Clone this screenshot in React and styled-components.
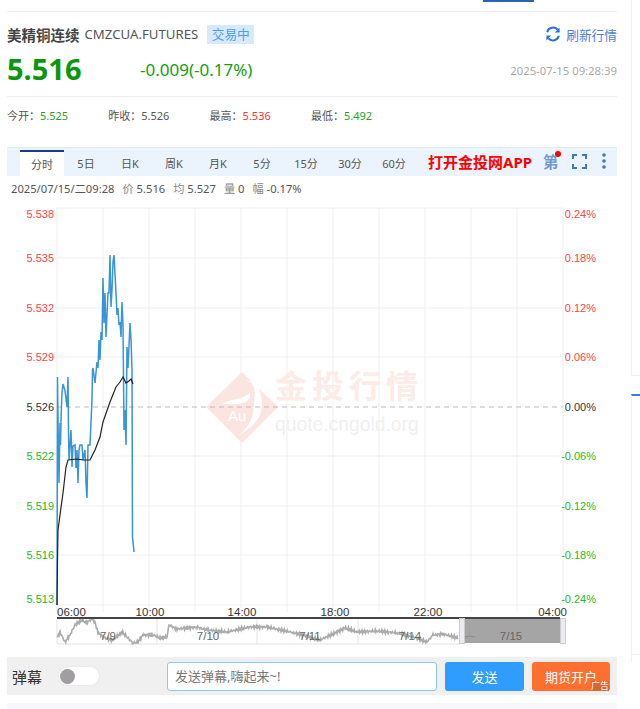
import React from "react"
import styled, { createGlobalStyle } from "styled-components"

const GlobalStyle = createGlobalStyle`
    html, body {
        margin: 0;
        padding: 0;
        background: #fff;
        overflow: hidden;
    }
    body {
        font-family: "Noto Sans", "Noto Sans CJK SC", sans-serif;
        color: #555;
    }
`

const Page = styled.div`
    display: flex;
    width: 640px;
    height: 709px;
    padding-left: 7px;
    box-sizing: border-box;
    overflow: hidden;
`

const Main = styled.main`
    width: 610px;
    flex: none;
    display: flex;
    flex-direction: column;
`

const Side = styled.aside`
    margin-left: 14px;
    flex: 1;
    display: flex;
    flex-direction: column;
`

const SidePanel = styled.div`
    height: ${props => props.$height}px;
    margin-bottom: ${props => props.$gap || 0}px;
    border-left: 1px solid #f0f0f0;
    border-bottom: ${props => props.$closed ? '1px solid #f0f0f0' : 'none'};
    border-top: ${props => props.$accent ? '2px solid #3b78e0' : 'none'};
    box-sizing: border-box;
`

const TopStrip = styled.div`
    height: 12px;
    box-sizing: border-box;
    border-bottom: 1px solid #f0f0f0;
    display: flex;
`

const TopMarker = styled.span`
    width: 51px;
    height: 2px;
    margin-left: 476px;
    background: #2a62b8;
`

const TitleRow = styled.header`
    margin-top: 11px;
    height: 22px;
    display: flex;
    align-items: center;
`

const Name = styled.h1`
    margin: 0;
    font-size: 14.5px;
    font-weight: bold;
    color: #444;
`

const Code = styled.span`
    margin-left: 5px;
    font-size: 13.2px;
    color: #555;
`

const Badge = styled.span`
    margin-left: 9px;
    width: 47px;
    height: 19px;
    line-height: 19px;
    text-align: center;
    font-size: 12.7px;
    color: #4b9df0;
    background: #d6eafc;
`

const Refresh = styled.a`
    margin-left: auto;
    display: flex;
    align-items: center;
    gap: 5px;
    font-size: 12.7px;
    color: #4c80d8;
`

const PriceRow = styled.section`
    height: 52px;
    box-sizing: border-box;
    border-bottom: 1px solid #f0f0f0;
    display: flex;
    align-items: center;
`

const Price = styled.strong`
    width: 133px;
    margin-bottom: 5px;
    font-size: 29px;
    font-weight: bold;
    color: #0a980a;
`

const Change = styled.span`
    margin-bottom: 2px;
    font-size: 17px;
    color: #12a012;
`

const Stamp = styled.time`
    margin-left: auto;
    font-size: 11.3px;
    color: #aaa;
`

const StatsRow = styled.section`
    height: 50px;
    padding-top: 9px;
    box-sizing: border-box;
    display: flex;
    line-height: 20px;
    font-size: 11px;
`

const Stat = styled.span`
    width: 101.3px;
    color: #555;
`

const StatValue = styled.span`
    color: ${props => props.$color || '#555'};
`

const TabBar = styled.nav`
    height: 29px;
    padding-left: 13px;
    box-sizing: border-box;
    background: #ebf3fd;
    border-top: 1px solid #e3ebf5;
    display: flex;
    align-items: flex-end;
`

const Tab = styled.span`
    width: 44px;
    height: 26px;
    box-sizing: border-box;
    text-align: center;
    font-size: 11px;
    line-height: ${props => props.$active ? '26px' : '24px'};
    color: #555;
    background: ${props => props.$active ? '#fff' : 'transparent'};
    border-top: 2px solid ${props => props.$active ? '#1c3a94' : 'transparent'};
`

const AppLink = styled.a`
    margin-left: 12px;
    height: 28px;
    line-height: 28px;
    font-size: 15px;
    font-weight: bold;
    color: #f00;
    white-space: nowrap;
`

const ToolGroup = styled.div`
    margin-left: 11px;
    height: 28px;
    display: flex;
    align-items: center;
`

const Dan = styled.span`
    position: relative;
    width: 16px;
    font-size: 15.5px;
    font-weight: bold;
    line-height: 28px;
    color: #6f9bd0;
    &::after {
        content: "";
        position: absolute;
        top: 3px;
        right: -2px;
        width: 6px;
        height: 6px;
        border-radius: 50%;
        background: #f00;
    }
`

const ToolIcon = styled.svg`
    margin-left: ${props => props.$gap}px;
    margin-bottom: 2px;
    display: block;
`

const InfoLine = styled.div`
    height: 24px;
    padding-left: 4px;
    display: flex;
    align-items: center;
    gap: 8px;
    font-size: 11.2px;
    color: #555;
`

const InfoLabel = styled.span`
    color: #888;
`

const Chart = styled.svg`
    display: block;
    width: 610px;
    height: 450px;
    flex: none;
`

const AxisLabel = styled.text`
    font-family: "Liberation Sans", sans-serif;
    font-size: 11px;
    fill: ${props => props.$color};
`

const TimeLabel = styled.text`
    font-family: "Liberation Sans", sans-serif;
    font-size: 11.5px;
    fill: #333;
`

const DayLabel = styled.text`
    font-family: "Liberation Sans", sans-serif;
    font-size: 11.5px;
    fill: #666;
`

const MarkTitle = styled.text`
    font-family: "Noto Sans CJK SC", sans-serif;
    font-size: 32px;
    font-weight: bold;
    letter-spacing: 5px;
    fill: #fcebe7;
`

const MarkSite = styled.text`
    font-family: "Liberation Sans", sans-serif;
    font-size: 19.3px;
    fill: #f0f0f0;
`

const MarkAu = styled.text`
    font-family: "Liberation Sans", sans-serif;
    font-size: 15px;
    fill: #fff;
`

const Footer = styled.footer`
    margin-top: 7px;
    height: 38px;
    background: #f0f0f0;
    display: flex;
    align-items: center;
    padding-left: 5px;
    box-sizing: border-box;
`

const FooterLabel = styled.span`
    width: 47px;
    font-size: 15px;
    color: #333;
`

const Toggle = styled.span`
    width: 40px;
    height: 18px;
    padding: 1px;
    box-sizing: border-box;
    border-radius: 9px;
    background: #fff;
    box-shadow: 0 0 2px #ddd;
    display: flex;
    align-items: center;
`

const Knob = styled.span`
    width: 15px;
    height: 15px;
    border-radius: 50%;
    background: #a09ea0;
`

const MessageInput = styled.input`
    margin-left: 68px;
    width: 270px;
    height: 29px;
    padding: 0 7px;
    box-sizing: border-box;
    border: 1px solid #8cc6f5;
    border-radius: 3px;
    outline: none;
    background: #fff;
    font-family: inherit;
    font-size: 13px;
    &::placeholder {
        color: #777;
        opacity: 1;
    }
`

const ActionButton = styled.button`
    position: relative;
    margin-left: 8px;
    width: ${props => props.$width}px;
    height: 29px;
    padding: 0;
    border: none;
    border-radius: 3px;
    background: ${props => props.$color};
    color: #fff;
    font-family: inherit;
    font-size: 13px;
`

const AdTag = styled.span`
    position: absolute;
    right: 1px;
    bottom: 0;
    width: 18px;
    height: 10px;
    line-height: 10px;
    font-size: 9px;
    text-align: center;
    background: #d9662e;
    color: #fff;
`

const BottomEdge = styled.div`
    margin-top: 8px;
    height: 6px;
    background: #f6f6fb;
`

const tabs = ['分时', '5日', '日K', '周K', '月K', '5分', '15分', '30分', '60分']

const stats = [
    { label: '今开', value: '5.525', color: '#1fa51f' },
    { label: '昨收', value: '5.526' },
    { label: '最高', value: '5.536', color: '#f33' },
    { label: '最低', value: '5.492', color: '#1fa51f' },
]

const RED = '#f44'
const GREEN = '#22bb22'
const DARK = '#333'

const rows = [
    { price: '5.538', pct: '0.24%', y: 208, textY: 218, color: RED },
    { price: '5.535', pct: '0.18%', y: 258, textY: 262, color: RED },
    { price: '5.532', pct: '0.12%', y: 308, textY: 312, color: RED },
    { price: '5.529', pct: '0.06%', y: 357, textY: 361, color: RED },
    { price: '5.526', pct: '0.00%', y: 407, textY: 411, color: DARK },
    { price: '5.522', pct: '-0.06%', y: 456, textY: 460, color: GREEN },
    { price: '5.519', pct: '-0.12%', y: 506, textY: 510, color: GREEN },
    { price: '5.516', pct: '-0.18%', y: 555, textY: 559, color: GREEN },
    { price: '5.513', pct: '-0.24%', y: 605, textY: 603, color: GREEN },
]

const columns = Array.from({ length: 12 }, (_, i) => 57 + i * 46)

const times = [
    { label: '06:00', x: 57, anchor: 'start' },
    { label: '10:00', x: 150, anchor: 'middle' },
    { label: '14:00', x: 242, anchor: 'middle' },
    { label: '18:00', x: 335, anchor: 'middle' },
    { label: '22:00', x: 428, anchor: 'middle' },
    { label: '04:00', x: 567, anchor: 'end' },
]

const days = [
    { label: '7/9', x: 108 },
    { label: '7/10', x: 208 },
    { label: '7/11', x: 310 },
    { label: '7/14', x: 410 },
    { label: '7/15', x: 511 },
]

const pricePoints = [
    [57, 605], [57.5, 377], [58, 420], [59, 483], [60, 423], [60.5, 445], [61, 420], [62, 392], [63, 384],
    [65, 391], [67, 407], [68, 377], [68.5, 430], [69, 460], [71, 430], [72, 467], [73, 446], [75, 445],
    [76, 468], [77, 450], [78, 483], [79, 450], [80, 445], [82, 445], [83, 460], [85, 450], [86, 483],
    [87, 498], [88, 445], [90, 445], [92, 400], [92.5, 370], [93, 368], [95, 383], [97, 362], [98, 368],
    [99, 340], [100, 360], [101, 332], [102, 340], [103, 278], [104, 323], [105, 293], [106, 337],
    [108, 293], [109, 293], [110, 255], [111, 307], [112, 290], [113, 262], [114, 255], [116, 293],
    [117, 315], [118, 308], [119, 325], [120, 322], [121, 337], [122, 302], [123, 325], [124, 430],
    [125, 410], [126, 445], [127, 347], [128, 368], [130, 323], [131, 340], [132, 370], [132.5, 537],
    [134, 552],
]

const avgPoints = [
    [57, 605], [57.5, 560], [58, 530], [60, 515], [63, 493], [66, 467], [68, 460], [76, 459], [84, 460],
    [90, 460], [95, 450], [100, 437], [103, 422], [110, 402], [116, 387], [120, 382], [123, 377],
    [126, 383], [129, 381], [131, 379], [133, 384],
]

const overviewPoints = [
    [57, 638], [60, 632], [65, 642], [70, 635], [75, 625], [82, 620], [86, 623], [92, 619], [95, 622],
    [98, 633], [105, 638], [113, 640], [122, 632], [133, 643], [138, 642], [143, 635], [153, 635],
    [160, 638], [167, 637], [169, 625], [177, 629], [197, 627], [207, 630], [227, 632], [250, 627],
    [267, 627], [290, 632], [307, 636], [313, 638], [320, 640], [335, 633], [345, 628], [357, 632],
    [377, 631], [397, 633], [413, 637], [427, 642], [433, 635], [443, 634], [458, 638],
]

const toPath = points => points.map(([x, y], i) => `${i ? 'L' : 'M'}${x} ${y}`).join(' ')

// the overview line is noisy, wobble it a little between the read-off points
const wobble = points => {
    const out = []
    points.slice(1).forEach(([x, y], i) => {
        const [px, py] = points[i]
        for (let sx = px; sx < x; sx += 0.7) {
            const t = (sx - px) / (x - px)
            const noise = Math.sin(sx * 4.7) * 1 + Math.sin(sx * 11.3) * 0.8
            out.push([+sx.toFixed(1), +(py + (y - py) * t + noise).toFixed(1)])
        }
    })
    return out
}

const RefreshIcon = () => (
    <svg width="16" height="16" viewBox="0 0 16 16" fill="none">
        <path d="M2.2 6.2A6 6 0 0 1 12.6 3.6" stroke="#2d6fd0" strokeWidth="2" />
        <path d="M13.8 9.8A6 6 0 0 1 3.4 12.4" stroke="#2d6fd0" strokeWidth="2" />
        <path d="M14.6 1.6V6.4H9.8Z" fill="#2d6fd0" />
        <path d="M1.4 14.4V9.6H6.2Z" fill="#2d6fd0" />
    </svg>
)

const FullscreenIcon = () => (
    <ToolIcon $gap={13} width="15" height="15" viewBox="0 0 15 15" fill="none" stroke="#3a78c9" strokeWidth="2">
        <path d="M1 5V1H5M10 1H14V5M14 10V14H10M5 14H1V10" />
    </ToolIcon>
)

const MoreIcon = () => (
    <ToolIcon $gap={14} width="6" height="16" viewBox="0 0 6 16" fill="#3a78c9">
        <circle cx="3" cy="2" r="1.8" />
        <circle cx="3" cy="8" r="1.8" />
        <circle cx="3" cy="14" r="1.8" />
    </ToolIcon>
)

const Watermark = () => (
    <g>
        <path d="M242 372L278 407L242 443L206 407Z" fill="#fbe5e0" />
        <path d="M246 380C258 384 254 396 254 404C254 420 246 430 238 436C250 428 262 420 262 404C262 392 258 382 246 380Z" fill="#fff" />
        <path d="M222 404C232 398 244 400 250 392L250 398C244 406 232 404 222 404Z" fill="#fff" />
        <MarkAu x="228" y="421">Au</MarkAu>
        <MarkTitle x="275" y="398">金投行情</MarkTitle>
        <MarkSite x="275" y="431">quote.cngold.org</MarkSite>
    </g>
)

const Overview = () => (
    <g>
        <rect x="57" y="619" width="403" height="25" fill="#fff" />
        <path d="M57 619V644H460" fill="none" stroke="#e4e4e4" />
        {[157, 257, 358].map(x => <path key={x} d={`M${x} 619V644`} stroke="#e4e4e4" />)}
        <path d={toPath(wobble(overviewPoints))} fill="none" stroke="#ababab" strokeWidth="1.6" />
        <rect x="465" y="619" width="95" height="24" fill="#a5a5a5" />
        <path d="M465 637L470 636L475 637" fill="none" stroke="#8a8a8a" />
        <path d="M57 618H560" stroke="#444" strokeWidth="2" />
        {days.map(day => <DayLabel key={day.label} x={day.x} y="640" textAnchor="middle">{day.label}</DayLabel>)}
        <rect x="459.5" y="618.5" width="5" height="25" fill="#ececf0" stroke="#ccc" />
        <rect x="560.5" y="618.5" width="5" height="25" fill="#ececf0" stroke="#ccc" />
    </g>
)

const PriceChart = () => (
    <Chart viewBox="7 200 610 450">
        {columns.map(x => <path key={x} d={`M${x} 208V612`} stroke="#efefef" />)}
        {rows.map(row => row.price !== '5.526' && <path key={row.y} d={`M57 ${row.y}H563`} stroke="#efefef" />)}
        <Watermark />
        <path d="M57 407H563" stroke="#bbb" strokeDasharray="5 4" />
        {rows.map(row => (
            <g key={row.price}>
                <AxisLabel x="54" y={row.textY} textAnchor="end" $color={row.color}>{row.price}</AxisLabel>
                <AxisLabel x="596" y={row.textY} textAnchor="end" $color={row.color}>{row.pct}</AxisLabel>
            </g>
        ))}
        <path d={toPath(pricePoints)} fill="none" stroke="#1583d0" strokeWidth="1.5" strokeOpacity="0.85" />
        <path d={toPath(avgPoints)} fill="none" stroke="#222" strokeWidth="1.2" />
        {times.map(t => <TimeLabel key={t.label} x={t.x} y="616" textAnchor={t.anchor}>{t.label}</TimeLabel>)}
        <Overview />
    </Chart>
)

export default function App() {
    return (
        <>
            <GlobalStyle />
            <Page>
                <Main>
                    <TopStrip><TopMarker /></TopStrip>
                    <TitleRow>
                        <Name>美精铜连续</Name>
                        <Code>CMZCUA.FUTURES</Code>
                        <Badge>交易中</Badge>
                        <Refresh><RefreshIcon />刷新行情</Refresh>
                    </TitleRow>
                    <PriceRow>
                        <Price>5.516</Price>
                        <Change>-0.009(-0.17%)</Change>
                        <Stamp>2025-07-15 09:28:39</Stamp>
                    </PriceRow>
                    <StatsRow>
                        {stats.map(stat => (
                            <Stat key={stat.label}>
                                {stat.label}：<StatValue $color={stat.color}>{stat.value}</StatValue>
                            </Stat>
                        ))}
                    </StatsRow>
                    <TabBar>
                        {tabs.map((tab, i) => <Tab key={tab} $active={i === 0}>{tab}</Tab>)}
                        <AppLink>打开金投网APP</AppLink>
                        <ToolGroup>
                            <Dan>第</Dan>
                            <FullscreenIcon />
                            <MoreIcon />
                        </ToolGroup>
                    </TabBar>
                    <InfoLine>
                        <span>2025/07/15/二09:28</span>
                        <span><InfoLabel>价</InfoLabel> 5.516</span>
                        <span><InfoLabel>均</InfoLabel> 5.527</span>
                        <span><InfoLabel>量</InfoLabel> 0</span>
                        <span><InfoLabel>幅</InfoLabel> -0.17%</span>
                    </InfoLine>
                    <PriceChart />
                    <Footer>
                        <FooterLabel>弹幕</FooterLabel>
                        <Toggle><Knob /></Toggle>
                        <MessageInput placeholder="发送弹幕,嗨起来~!" readOnly />
                        <ActionButton $width={79} $color="#2e9dff">发送</ActionButton>
                        <ActionButton $width={78} $color="#ff6f30">期货开户<AdTag>广告</AdTag></ActionButton>
                    </Footer>
                    <BottomEdge />
                </Main>
                <Side>
                    <SidePanel $height={376} $gap={18} $closed />
                    <SidePanel $height={261} $closed $accent />
                    <SidePanel $height={8} />
                </Side>
            </Page>
        </>
    )
}
